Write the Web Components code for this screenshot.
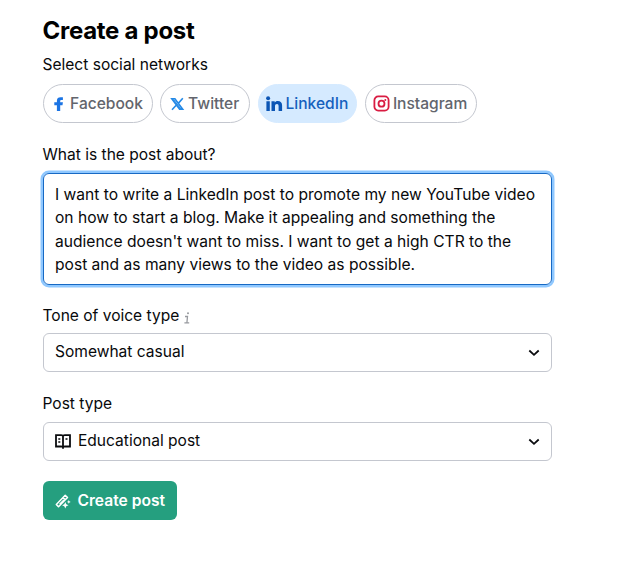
<!DOCTYPE html>
<html lang="en">
<head>
<meta charset="utf-8">
<title>Create a post</title>
<style>
html,body{margin:0;background:#fff}
body{font-family:Inter,"Liberation Sans",sans-serif;font-size:16px;color:#08090b}
</style>
</head>
<body>
<post-form>
  <h1 slot="title">Create a post</h1>
  <form-field class="networks" label="Select social networks">
    <chip-group>
      <network-chip icon="facebook" style="width:110px">Facebook</network-chip>
      <network-chip icon="twitter" style="width:90px">Twitter</network-chip>
      <network-chip icon="linkedin" selected style="width:99px">LinkedIn</network-chip>
      <network-chip icon="instagram" style="width:112px">Instagram</network-chip>
    </chip-group>
  </form-field>
  <form-field class="about" label="What is the post about?">
    <text-box>I want to write a LinkedIn post to promote my new YouTube video<br>on how to start a blog. Make it appealing and something the<br>audience doesn't want to miss. I want to get a high CTR to the<br>post and as many views to the video as possible.</text-box>
  </form-field>
  <form-field class="tone" label="Tone of voice type" info>
    <select-box>Somewhat casual</select-box>
  </form-field>
  <form-field class="type" label="Post type">
    <select-box><ui-icon slot="icon" name="book"></ui-icon>Educational post</select-box>
  </form-field>
  <action-button><ui-icon slot="icon" name="wand"></ui-icon>Create post</action-button>
</post-form>
<script>
const icons = {
  facebook: '<svg width="16" height="16" viewBox="0 0 16 16"><path fill="#1b74e4" d="M5.900 15V9.300H3.300V6.300h2.600V4.700C5.900 2.300 7.300 1.200 9.600 1.200h2.300v2.700h-1.400c-1 0-1.300.4-1.300 1.200v1.200h2.700l-.4 3H9.200V15z"/></svg>',
  twitter: '<svg width="15" height="16" viewBox="0 0 15 16"><path fill="none" stroke="#2489e6" stroke-width="1.600" d="M1.800 2.700h3.100l7.800 10.600H9.600zM12.800 2.300 8.500 7.100M6.200 9.300 2 13.700"/><path stroke="#2489e6" stroke-width="1.200" d="m3.500 3.500 7.200 9.400"/></svg>',
  linkedin: '<svg width="17" height="16" viewBox="0 0 17 16"><g fill="#0b55b5"><circle cx="2.100" cy="2.200" r="2"/><path d="M.4 5.300h3.400V15H.4zM5.500 5.300h3.200v1.300c.6-1 1.600-1.600 3-1.600 3 0 4.400 1.500 4.400 4.500V15h-3.500v-4.700c0-1.500-.5-2.200-1.600-2.200-1.300 0-2 .8-2 2.300V15H5.500z"/></g></svg>',
  instagram: '<svg width="17" height="17" viewBox="0 0 17 17" fill="none" stroke="#d91c42" stroke-width="1.800"><rect x="1.400" y="1.400" width="14.200" height="14.200" rx="3.800"/><circle cx="8.500" cy="8.700" r="3"/><circle cx="12.300" cy="4.900" r="1" fill="#d91c42" stroke="none"/></svg>',
  book: '<svg width="16" height="17" viewBox="0 0 16 17" fill="none" stroke="#0b0c0f" stroke-width="1.800"><path d="M1 2.200h5.200c1 0 1.800.4 1.800 1.100 0-.7.8-1.100 1.800-1.100H15v11.300H9.800c-1 0-1.800.4-1.800 1.100 0-.7-.8-1.100-1.800-1.100H1zM8 3.300v12.500"/><path stroke-width="1.500" d="M3.300 6h2M3.300 8.900h2M10.500 6h2"/></svg>',
  wand: '<svg width="16" height="16" viewBox="0 0 16 16" fill="none" stroke="#fff" stroke-width="1.500" stroke-linejoin="round"><path d="M1.300 11.400 10.200 2.300l2.300 2.300-9 9.200zM8 4.500l2.300 2.300M4.700 11.300l4.300-4.400"/><path fill="#fff" stroke="none" d="m10.300 9.100 1 2.200 2.200 1-2.200 1-1 2.300-1-2.300-2.200-1 2.200-1zM13.800 7l.6 1.300 1.300.6-1.300.6-.6 1.300-.6-1.300-1.300-.6 1.300-.6z"/></svg>',
  chevron: '<svg width="12" height="8" viewBox="0 0 12 8"><path fill="none" stroke="#0b0c0f" stroke-width="1.800" d="M1.300 1.500 6 5.800l4.700-4.300"/></svg>',
  info: '<svg width="7" height="12" viewBox="0 0 7 12"><path fill="none" stroke="#989a9f" stroke-width="1.300" d="M1 4.500h2.500L2.900 10.700M.4 10.900h4.800"/><circle cx="4" cy="1.300" r="1" fill="#989a9f"/></svg>'
};
function define(name, render) {
  customElements.define(name, class extends HTMLElement {
    connectedCallback() {
      if (!this.shadowRoot) this.attachShadow({mode: 'open'}).innerHTML = render(this);
    }
  });
}
define('ui-icon', el => `<style>:host{display:block;flex:none;line-height:0}svg{display:block}</style>${icons[el.getAttribute('name')]}`);
define('post-form', () => `<style>
:host{display:flex;flex-direction:column;align-items:flex-start;box-sizing:border-box;width:640px;height:578px;padding:16px 0 0 42.500px}
::slotted(h1){margin:0;height:30px;font-size:24px;line-height:30px;font-weight:700;letter-spacing:-.28px;color:#000}
::slotted(form-field){width:509.900px}
::slotted(.networks){margin-top:8px;--label-gap:8px}
::slotted(.about){margin-top:21px;--label-gap:7px}
::slotted(.tone){margin-top:20px;--label-gap:6px}
::slotted(.type){margin-top:21px;--label-gap:7px}
::slotted(action-button){margin-top:20px}
</style><slot name="title"></slot><slot></slot>`);
define('form-field', el => `<style>
:host{display:block}
.label{display:flex;align-items:center;gap:5px;height:22px;margin-bottom:var(--label-gap,7px);font-size:15.550px;line-height:22px;white-space:nowrap}
ui-icon{margin-top:3px}
</style><div class="label"><span>${el.getAttribute('label')}</span>${el.hasAttribute('info') ? '<ui-icon name="info"></ui-icon>' : ''}</div><slot></slot>`);
define('chip-group', () => `<style>:host{display:flex;gap:7.700px}</style><slot></slot>`);
define('network-chip', el => `<style>
:host{display:flex;align-items:center;justify-content:center;gap:3px;box-sizing:border-box;height:39px;flex:none;padding-right:1px;border:1px solid #c4c7cf;border-radius:20px;color:#62656d;font-size:15.550px;font-weight:500;line-height:22px;white-space:nowrap}
:host([selected]){background:#d5eaff;border-color:#d5eaff;color:#1560bd}
</style><ui-icon name="${el.getAttribute('icon')}"></ui-icon><span><slot></slot></span>`);
define('text-box', () => `<style>
:host{display:block;box-sizing:border-box;height:112px;padding:9px 11.500px;border:1.500px solid #1769c4;border-radius:6px;box-shadow:0 0 0 2.500px #8fc8ff;font-size:15.600px;line-height:23.400px;white-space:nowrap}
</style><slot></slot>`);
define('select-box', () => `<style>
:host{display:flex;align-items:center;box-sizing:border-box;height:39px;padding:0 11.500px;border:1px solid #c4c7cf;border-radius:6px;font-size:15.550px;line-height:22px;white-space:nowrap}
::slotted(ui-icon){margin-right:7px}
.value{flex:1;margin-top:-1px}
ui-icon{margin-top:1px}
</style><slot name="icon"></slot><span class="value"><slot></slot></span><ui-icon name="chevron"></ui-icon>`);
define('action-button', () => `<style>
:host{display:flex;align-items:center;justify-content:center;gap:7px;box-sizing:border-box;width:134.500px;height:39px;border-radius:6px;background:#259f7f;color:#fff;font-size:15.600px;font-weight:600;line-height:22px;white-space:nowrap}
</style><slot name="icon"></slot><span><slot></slot></span>`);
</script>
</body>
</html>
